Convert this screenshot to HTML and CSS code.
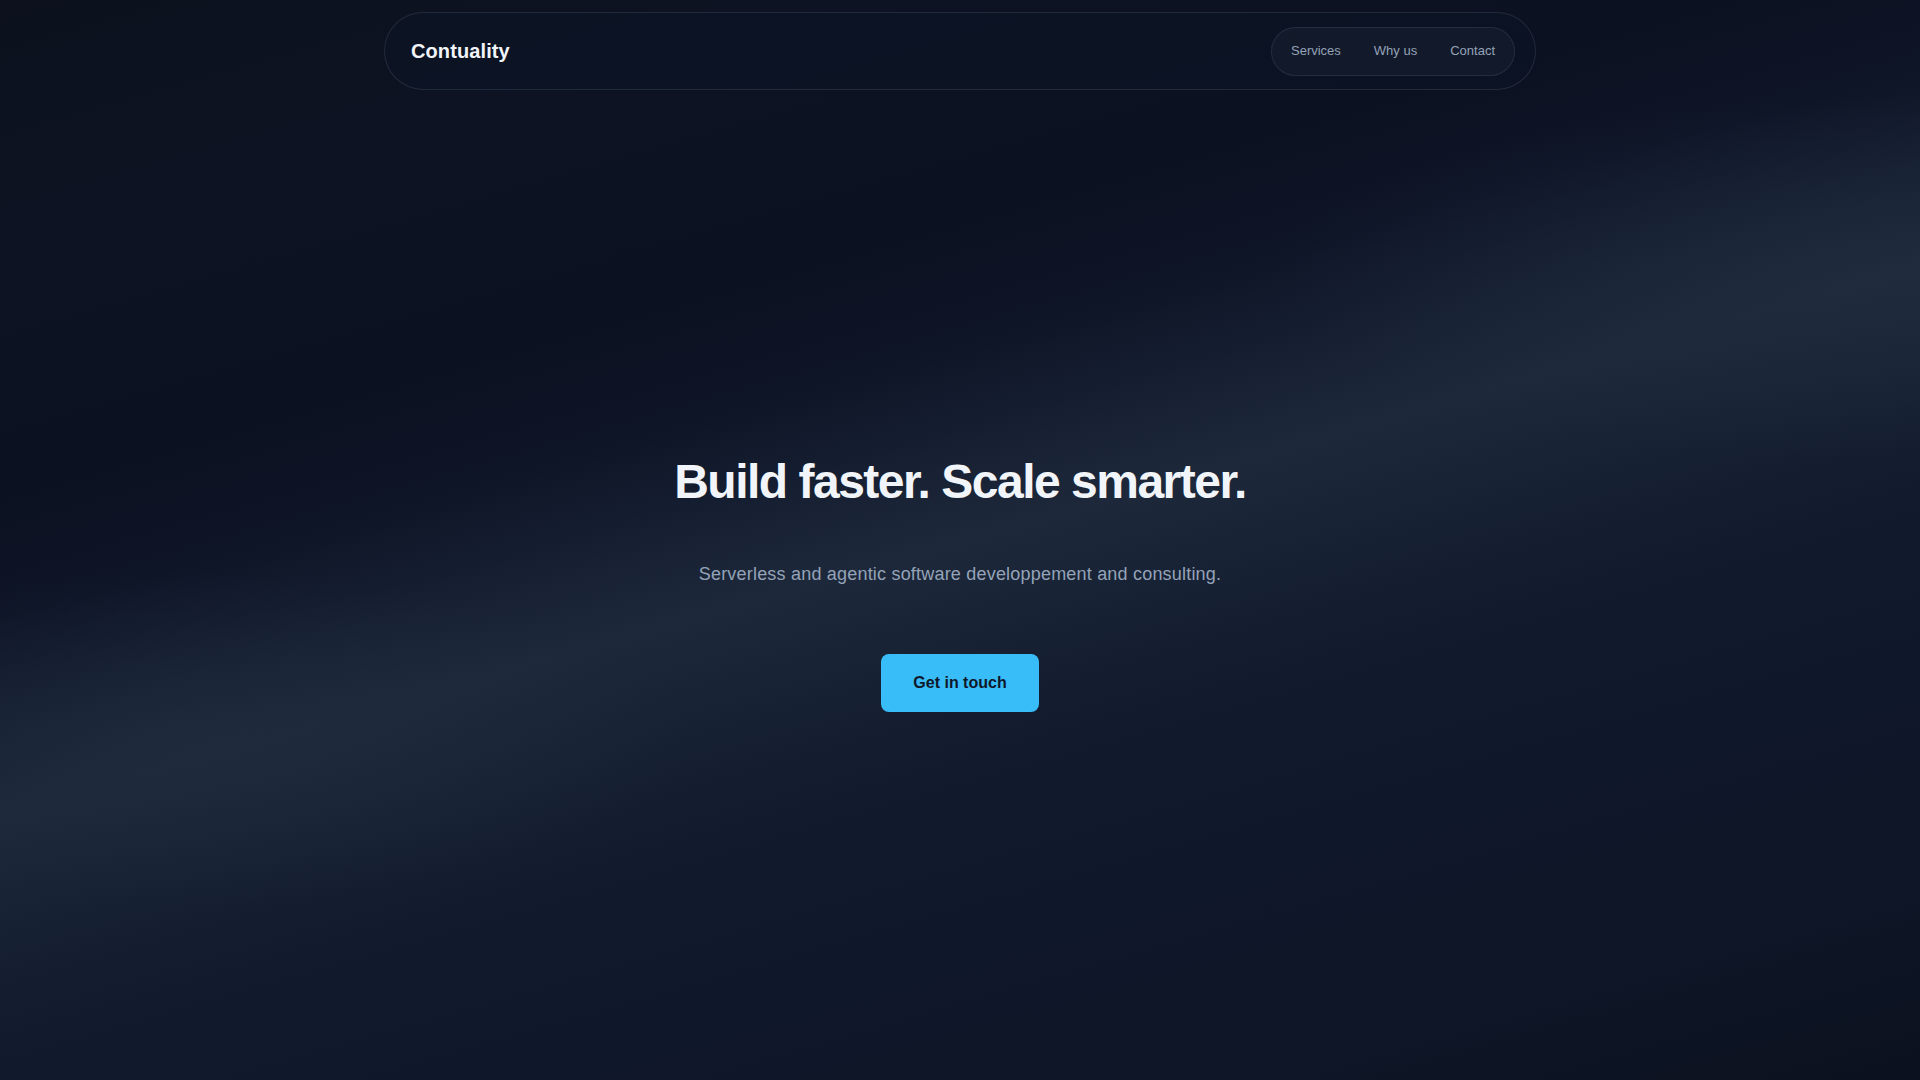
FILE: index.html
```html
<!DOCTYPE html>
<html lang="en">
<head>
<meta charset="utf-8">
<title>Contuality</title>
<link rel="stylesheet" href="styles.css">
</head>
<body>
<div class="page">
  <header class="header">
    <nav class="nav">
      <a class="logo" href="#">Contuality</a>
      <div class="links">
        <a class="link" href="#services">Services</a>
        <a class="link" href="#why">Why us</a>
        <a class="link" href="#contact">Contact</a>
      </div>
    </nav>
  </header>
  <main class="hero">
    <h1 class="title">Build faster. Scale smarter.</h1>
    <p class="subtitle">Serverless and agentic software developpement and consulting.</p>
    <a class="cta" href="#contact">Get in touch</a>
  </main>
</div>
</body>
</html>
```

FILE: styles.css
```css
html, body {
  margin: 0;
  padding: 0;
  height: 100%;
}

body {
  font-family: "Liberation Sans", Arial, Helvetica, sans-serif;
  background-color: #0f172a;
  background-image:
    radial-gradient(ellipse 900px 260px at 1900px 280px, rgba(34, 46, 66, 0.5), rgba(34, 46, 66, 0) 70%),
    radial-gradient(ellipse 700px 240px at 200px 740px, rgba(34, 46, 66, 0.45), rgba(34, 46, 66, 0) 70%),
    linear-gradient(164deg,
      #0c111d 0%,
      #0d1322 14%,
      #0b1120 30%,
      #0e1527 38%,
      #172133 45%,
      #1d283a 50%,
      #182235 56%,
      #121a2d 64%,
      #0f172a 74%,
      #0e1627 88%,
      #0b111e 100%);
  color: #f1f5f9;
}

a {
  text-decoration: none;
  color: inherit;
}

.page {
  min-height: 100vh;
  display: flex;
  flex-direction: column;
}

.header {
  padding-top: 12px;
  display: flex;
  justify-content: center;
}

.nav {
  box-sizing: border-box;
  width: 1152px;
  height: 78px;
  display: flex;
  align-items: center;
  justify-content: space-between;
  padding: 0 20px 0 26px;
  border: 1px solid rgba(148, 163, 184, 0.16);
  border-radius: 9999px;
  background: rgba(13, 20, 38, 0.55);
}

.logo {
  font-size: 20px;
  line-height: 24px;
  font-weight: 700;
  letter-spacing: 0.1px;
  color: #f1f5f9;
}

.links {
  display: flex;
  align-items: center;
  gap: 5px;
  padding: 5px;
  border: 1px solid rgba(148, 163, 184, 0.14);
  border-radius: 9999px;
  background: rgba(148, 163, 184, 0.05);
}

.link {
  font-size: 13px;
  line-height: 17px;
  padding: 9px 14px 11px;
  color: #94a3b8;
  border-radius: 9999px;
}

.hero {
  flex: 1;
  display: flex;
  flex-direction: column;
  align-items: center;
  justify-content: center;
  text-align: center;
}

.title {
  margin: 0;
  font-size: 48px;
  line-height: 1;
  font-weight: 700;
  letter-spacing: -1.5px;
  color: #f1f5f9;
}

.subtitle {
  margin: 54px 0 0;
  font-size: 18px;
  line-height: 28px;
  letter-spacing: 0.2px;
  color: #94a3b8;
}

.cta {
  margin-top: 66px;
  padding: 17px 32px;
  font-size: 16px;
  line-height: 24px;
  font-weight: 700;
  color: #0f172a;
  background: #38bdf8;
  border-radius: 8px;
}
```
